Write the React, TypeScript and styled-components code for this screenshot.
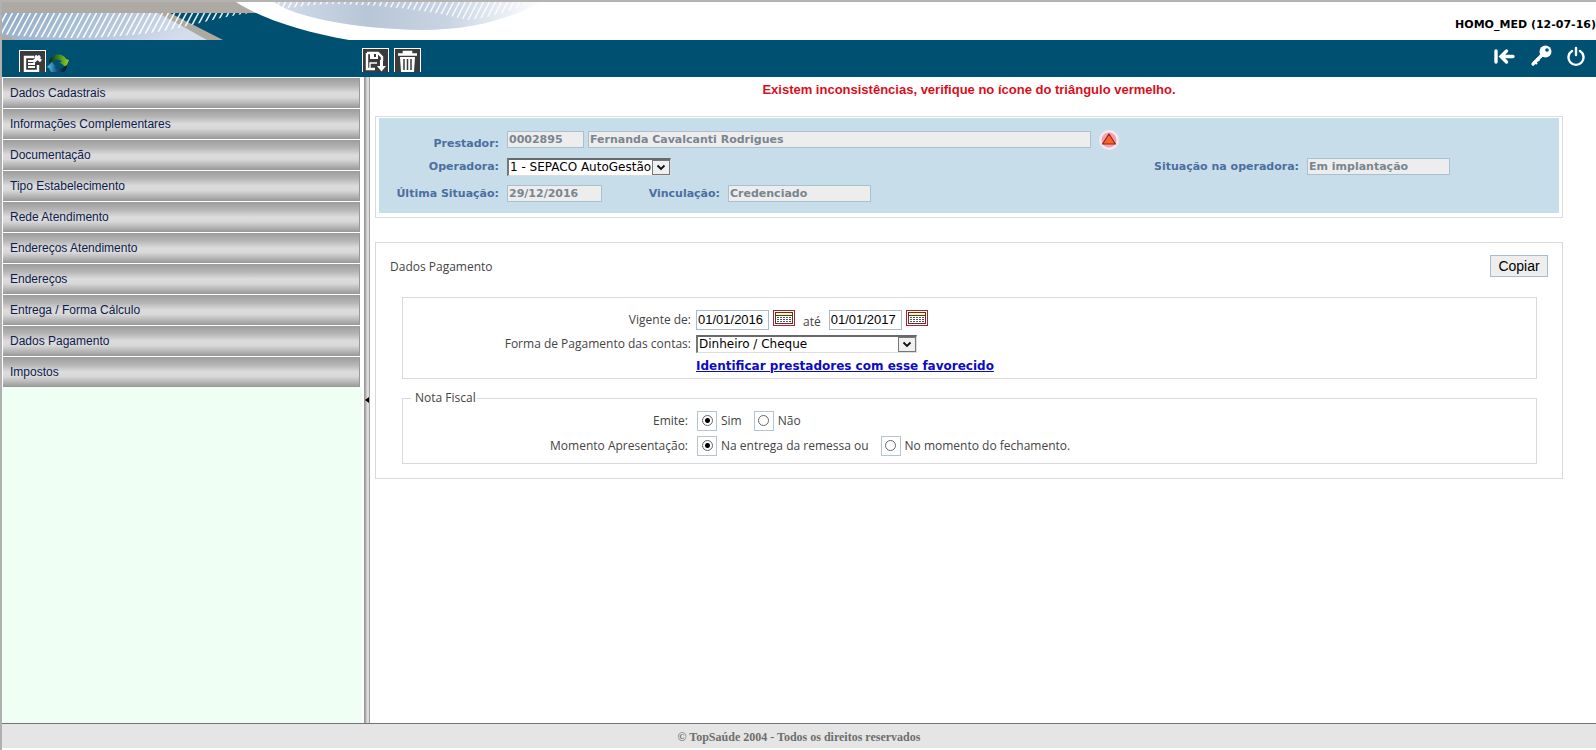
import React, { useState } from "react";
import styled, { createGlobalStyle } from "styled-components";

const verdana = `Verdana, "DejaVu Sans", sans-serif`;
const arial = `Arial, "Liberation Sans", sans-serif`;
const trebuchet = `"Open Sans", "Noto Sans", sans-serif`;

const GlobalStyle = createGlobalStyle`
  * { box-sizing: border-box; }
  body { margin: 0; background: #fff; overflow-x: hidden; }
  button, input, select { margin: 0; border-radius: 0; }
`;

const Shell = styled.div`
  display: flex;
  flex-direction: column;
  min-height: 100vh;
  padding-bottom: 2px;
  border-top: 2px solid #b3b3b3;
  border-left: 2px solid #b0b0b0;
`;

const Banner = styled.header`
  display: flex;
  align-items: center;
  justify-content: space-between;
  height: 38px;
  overflow: hidden;
`;

const BannerArt = styled.svg`
  display: block;
  flex: none;
`;

const Environment = styled.span`
  flex: none;
  padding-top: 8px;
  font: bold 11px/16px ${verdana};
  color: #000;
  white-space: nowrap;
`;

const Toolbar = styled.nav`
  display: flex;
  justify-content: space-between;
  height: 37px;
  background: #005072;
`;

const ToolGroup = styled.div<{ $width?: number; $gap: number }>`
  display: flex;
  align-items: flex-end;
  gap: ${(p) => p.$gap}px;
  width: ${(p) => (p.$width ? `${p.$width}px` : "auto")};
  padding-bottom: 5px;
`;

const Tools = styled.div`
  display: flex;
  padding-left: 17px;
`;

const ToolButton = styled.button<{ $height: number }>`
  width: 27px;
  height: ${(p) => p.$height}px;
  padding: 0;
  border: 1px solid #fff;
  border-bottom: 0;
  background: #3b3b3d;
  overflow: hidden;
  svg { display: block; }
`;

const PlainButton = styled.button`
  display: block;
  padding: 0;
  border: 0;
  background: none;
  svg { display: block; }
`;

const Session = styled.div`
  display: flex;
  align-items: flex-start;
  gap: 15px;
  padding: 5px 11px 0 0;
`;

const Body = styled.div`
  display: flex;
  flex: 1;
`;

const Sidebar = styled.aside`
  flex: none;
  width: 360px;
  margin-right: 2px;
  background: #f0fff4;
`;

const Menu = styled.ul`
  margin: 0;
  padding: 1px 2px 0 1px;
  list-style: none;
  background: #fff;
`;

const MenuLink = styled.a`
  display: block;
  height: 30px;
  margin-bottom: 1px;
  padding: 0 7px;
  border-right: 1px solid #999;
  background: linear-gradient(#9b9d9c, #b4b4b4 25%, #dcdcdc 50%, #d8d8d8 65%, #b4b4b4 85%, #979797);
  font: 12px/30px ${arial};
  color: #0d1b4c;
  text-decoration: none;
`;

const Splitter = styled.button`
  display: flex;
  flex: none;
  align-items: center;
  justify-content: center;
  width: 6px;
  padding: 0;
  border: 0;
  background: linear-gradient(90deg, #999 1px, #b8b8b8 2px, #dcdcdc 3px, #dcdcdc 5px, #a0a0a0 5px);
`;

const Content = styled.main`
  flex: 1;
  min-width: 0;
  padding: 0 33px 24px 5px;
`;

const Warning = styled.p`
  margin: 0;
  padding: 5px 0 19px;
  font: bold 13px/15px ${arial};
  color: #d8101c;
  text-align: center;
`;

const ProviderFrame = styled.section`
  padding: 1px 3px 4px;
  margin-bottom: 24px;
  border: 1px solid #d5dde3;
`;

const ProviderCard = styled.div`
  padding: 8px 0 6px;
  background: #c8ddea;
`;

const ProviderRow = styled.div`
  display: flex;
  align-items: center;
  height: 27px;
`;

const ProviderLabel = styled.label<{ $width?: number; $low?: boolean }>`
  flex: none;
  align-self: ${(p) => (p.$low ? "flex-end" : "center")};
  width: ${(p) => (p.$width ? `${p.$width}px` : "auto")};
  margin-right: 8px;
  font: bold 11px/19px ${verdana};
  color: #4b6f9f;
  text-align: right;
  white-space: nowrap;
`;

const ReadField = styled.input<{ $width: number }>`
  width: ${(p) => p.$width}px;
  height: 17px;
  margin-right: 4px;
  padding: 0 1px;
  border: 1px solid #a9c0d0;
  background: #ededed;
  font: bold 11px/15px ${verdana};
  color: #78868f;
`;

const Gap = styled.div<{ $size: number }>`
  flex: 0 0 ${(p) => p.$size}px;
`;

const RightPair = styled.div`
  display: flex;
  align-items: center;
  margin-left: auto;
  padding-right: 105px;
`;

const SelectBox = styled.span<{ $width: number }>`
  position: relative;
  display: block;
  width: ${(p) => p.$width}px;
  height: 18px;
  svg {
    position: absolute;
    top: 2px;
    right: 1px;
    pointer-events: none;
  }
`;

const SelectInput = styled.select`
  display: block;
  appearance: none;
  width: 100%;
  height: 18px;
  padding: 0 16px 0 1px;
  border: 1px solid #ddd;
  border-top: 2px solid #696969;
  border-left: 2px solid #777;
  background: #fff;
  font: 12px/15px ${verdana};
  color: #000;
`;

const PaymentPanel = styled.section`
  padding: 12px 14px 14px;
  border: 1px solid #d9d9dc;
`;

const PanelHead = styled.div`
  display: flex;
  align-items: center;
  justify-content: space-between;
  margin-bottom: 20px;
`;

const PanelTitle = styled.h1`
  margin: 0;
  padding-top: 2px;
  font: 500 12px/16px ${trebuchet};
  color: #444;
`;

const CopyButton = styled.button`
  width: 58px;
  height: 22px;
  padding: 0;
  border: 1px solid #a9bccb;
  background: #eee;
  font: 14px/18px ${arial};
  color: #000;
`;

const Group = styled.div`
  margin: 0 11px 11px 12px;
  padding: 9px 0 2px;
  border: 1px solid #d9d9dc;
`;

const InvoiceGroup = styled.fieldset`
  min-width: 0;
  margin: 0 11px 0 12px;
  padding: 2px 0 5px;
  border: 1px solid #d9d9dc;
`;

const Legend = styled.legend`
  height: 16px;
  margin-left: 8px;
  padding: 0 1px 0 4px;
  font: 500 12px/16px ${trebuchet};
  color: #444;
`;

const FormRow = styled.div<{ $height: number; $gap: number; $label: number }>`
  display: grid;
  grid-template-columns: ${(p) => p.$label}px 1fr;
  column-gap: ${(p) => p.$gap}px;
  align-items: center;
  height: ${(p) => p.$height}px;
`;

const FormLabel = styled.label`
  font: 500 12px/16px ${trebuchet};
  color: #444;
  text-align: right;
`;

const Inline = styled.div<{ $top?: boolean }>`
  display: flex;
  align-items: ${(p) => (p.$top ? "flex-start" : "center")};
`;

const DateField = styled.input`
  width: 73px;
  height: 20px;
  margin-right: 4px;
  padding: 0 1px;
  border: 1px solid #a9bccb;
  font: 13px/18px ${arial};
  color: #000;
`;

const Until = styled.label`
  margin: 0 8px;
  padding-top: 4px;
  font: 500 12px/16px ${trebuchet};
  color: #444;
`;

const FavoredLink = styled.a`
  justify-self: start;
  font: bold 12px/16px ${verdana};
  color: #0b0bc4;
`;

const Choice = styled.label`
  display: flex;
  align-items: center;
  gap: 4px;
  margin-right: 12px;
  font: 500 12px/20px ${trebuchet};
  color: #444;
`;

const RadioBox = styled.span`
  display: flex;
  align-items: center;
  justify-content: center;
  width: 20px;
  height: 20px;
  border: 1px solid #b4c5d2;
`;

const Radio = styled.input`
  appearance: none;
  width: 11px;
  height: 11px;
  border: 1px solid #666;
  border-radius: 50%;
  background: #fff;
  &:checked { background: radial-gradient(circle, #000 0 2px, #fff 3px); }
`;

const Footer = styled.footer`
  height: 25px;
  border-top: 1px solid #707478;
  background: #e5e5e5;
  font: bold 12px/27px "Liberation Serif", serif;
  color: #6e6e6e;
  text-align: center;
`;

const range = (start: number, end: number, step: number) =>
  Array.from({ length: Math.ceil((end - start) / step) }, (_, i) => start + i * step);

const Swoosh = () => (
  <BannerArt width="560" height="38" viewBox="0 0 560 38" aria-hidden="true">
    <defs>
      <linearGradient id="left" x1="0" x2="1" y1="0" y2="0.2">
        <stop offset="0" stopColor="#8eabc6" />
        <stop offset="0.6" stopColor="#b4c6d9" />
        <stop offset="1" stopColor="#d5ddec" />
      </linearGradient>
      <linearGradient id="right" x1="0" x2="1" y1="0" y2="0">
        <stop offset="0" stopColor="#d3dcea" />
        <stop offset="0.35" stopColor="#b7c6d6" />
        <stop offset="0.65" stopColor="#c9d4e3" />
        <stop offset="1" stopColor="#fff" />
      </linearGradient>
      <linearGradient id="hatchFade" gradientUnits="userSpaceOnUse" x1="0" x2="540" y1="0" y2="0">
        <stop offset="0" stopColor="#fff" />
        <stop offset="1" stopColor="#fff" stopOpacity="0.8" />
      </linearGradient>
      <clipPath id="leftHatch">
        <path d="M0 11H250C215 14 175 30 130 33C90 37 40 37 0 32Z" />
      </clipPath>
      <clipPath id="rightHatch">
        <path d="M272 0H530C505 10 485 17 465 18C435 10 390 3 330 2C310 2 290 6 280 7Z" />
      </clipPath>
    </defs>
    <path d="M0 0H236L270 12L221 38H0Z" fill="#aeaaa3" />
    <path d="M168 11H266L360 38H221Z" fill="#005072" />
    <path d="M0 11H156Q182 25 205 38H14Q6 34 0 33Z" fill="url(#left)" />
    <g clipPath="url(#leftHatch)" stroke="url(#hatchFade)" strokeWidth="1.5">
      {range(-16, 260, 6).map((x) => (
        <path key={x} d={`M${x} 38L${x + 15} 10`} />
      ))}
    </g>
    <path d="M234 0H560V38H347C300 30 258 16 234 0Z" fill="#fff" />
    <path d="M272 0H540C510 15 475 28 420 28C350 27 290 14 272 0Z" fill="url(#right)" />
    <g clipPath="url(#rightHatch)" stroke="url(#hatchFade)" strokeWidth="1.5">
      {range(260, 540, 6).map((x) => (
        <path key={x} d={`M${x} 22L${x + 12} -1`} />
      ))}
    </g>
  </BannerArt>
);

const EditIcon = () => (
  <svg width="25" height="21" viewBox="0 0 25 21">
    <path d="M14 6H5V20H18V14" fill="none" stroke="#fff" strokeWidth="2.4" />
    <path d="M8 10h5M8 13h7M8 16h7" stroke="#fff" strokeWidth="1.8" />
    <path d="M13 11L20 5M15 5l6 5" stroke="#fff" strokeWidth="3" />
  </svg>
);

const RefreshIcon = () => (
  <svg width="23" height="18" viewBox="0 0 23 18">
    <defs>
      <linearGradient id="greenArc" x1="0" x2="1" y1="0" y2="0">
        <stop offset="0" stopColor="#08240f" />
        <stop offset="0.5" stopColor="#3c8a1c" />
        <stop offset="1" stopColor="#9bd422" />
      </linearGradient>
      <linearGradient id="blueArc" x1="0" x2="1" y1="0" y2="0">
        <stop offset="0" stopColor="#5cc8ea" />
        <stop offset="0.5" stopColor="#14507a" />
        <stop offset="1" stopColor="#041420" />
      </linearGradient>
    </defs>
    <path d="M2 8C4-1 16-2 19 5L22 6L19 13L12 8L15 8C12 4 7 5 3 9Z" fill="url(#greenArc)" />
    <path d="M0 13L5 8L9 13H7C9 16 14 16 20 11C20 14 19 16 17 18H4L2 14Z" fill="url(#blueArc)" />
  </svg>
);

const SaveIcon = () => (
  <svg width="25" height="23" viewBox="0 0 25 23">
    <path d="M4 4H15L19 8V12M12 20H4V4" fill="none" stroke="#fff" strokeWidth="2.4" />
    <path d="M7 4H15V10H7Z" fill="#fff" />
    <path d="M11 5H13V8H11Z" fill="#3b3b3d" />
    <path d="M7 19V14H14" fill="none" stroke="#fff" strokeWidth="1.4" />
    <path d="M17 11h3v6h3l-4.500 5.500L14 17h3Z" fill="#fff" />
  </svg>
);

const TrashIcon = () => (
  <svg width="25" height="23" viewBox="0 0 25 23">
    <path d="M3 5.500H22M9 5V3H16V5" fill="none" stroke="#fff" strokeWidth="2.6" />
    <path d="M5 8H20L19 23H6Z" fill="#fff" />
    <path d="M9 10v11M12.500 10v11M16 10v11" stroke="#3b3b3d" strokeWidth="1.500" />
  </svg>
);

const BackIcon = () => (
  <svg width="22" height="22" viewBox="0 0 22 22" stroke="#fff" strokeWidth="3.400" strokeLinecap="round" fill="none">
    <path d="M3 6V17M8 11.500H20M13.500 6L8 11.500L13.500 17" />
  </svg>
);

const KeyIcon = () => (
  <svg width="22" height="22" viewBox="0 0 22 22">
    <path d="M12 10L3 19" stroke="#fff" strokeWidth="3.200" strokeLinecap="round" />
    <path d="M4 16L7 19M7 13L9 16" stroke="#fff" strokeWidth="2.200" />
    <circle cx="15.500" cy="6.500" r="6" fill="#fff" />
    <circle cx="17" cy="5" r="1.800" fill="#005072" />
  </svg>
);

const PowerIcon = () => (
  <svg width="18" height="22" viewBox="0 0 18 22" fill="none" stroke="#fff" strokeWidth="2.400" strokeLinecap="round">
    <path d="M9 3V10M5 6A7.500 7.500 0 1 0 13 6" />
  </svg>
);

const AlertIcon = () => (
  <svg width="20" height="20" viewBox="0 0 20 20">
    <circle cx="10" cy="10" r="10" fill="#f8e6ee" />
    <circle cx="10" cy="10" r="7.500" fill="#f2a0ac" />
    <path d="M10 4L16.500 14H3.500Z" fill="#fb6428" stroke="#8c2626" strokeWidth="1.200" strokeLinejoin="round" />
  </svg>
);

const CalendarIcon = () => (
  <svg width="22" height="16" viewBox="0 0 22 16" shapeRendering="crispEdges">
    <rect width="22" height="16" fill="#b3202c" />
    <rect x="1" y="1" width="20" height="14" fill="#fff" />
    <rect x="2" y="2" width="18" height="12" fill="#4a3a33" />
    <rect x="3" y="3" width="16" height="2" fill="#fbf3a6" />
    <rect x="3" y="6" width="16" height="7" fill="#fff" />
    <path d="M4 7.500H18M4 9.500H18M4 11.500H16" stroke="#555" strokeDasharray="2 1" />
    <path d="M16 9.500H18M16 11.500H18" stroke="#c0202c" />
  </svg>
);

const SelectArrow = () => (
  <svg width="18" height="15" viewBox="0 0 18 15" aria-hidden="true">
    <rect x="0.500" y="0.500" width="17" height="14" fill="#f0f0f0" stroke="#777" />
    <path d="M5.500 5.500L9 9L12.500 5.500" fill="none" stroke="#111" strokeWidth="1.800" />
  </svg>
);

const menuItems = [
  "Dados Cadastrais",
  "Informações Complementares",
  "Documentação",
  "Tipo Estabelecimento",
  "Rede Atendimento",
  "Endereços Atendimento",
  "Endereços",
  "Entrega / Forma Cálculo",
  "Dados Pagamento",
  "Impostos",
];

const Select = ({ id, width, options }: { id: string; width: number; options: string[] }) => (
  <SelectBox $width={width}>
    <SelectInput id={id}>
      {options.map((o) => (
        <option key={o}>{o}</option>
      ))}
    </SelectInput>
    <SelectArrow />
  </SelectBox>
);

const RadioGroup = ({ name, options }: { name: string; options: string[] }) => {
  const [value, setValue] = useState(options[0]);
  return (
    <Inline role="radiogroup" aria-labelledby={`${name}-label`}>
      {options.map((o) => (
        <Choice key={o}>
          <RadioBox>
            <Radio type="radio" name={name} checked={value === o} onChange={() => setValue(o)} />
          </RadioBox>
          {o}
        </Choice>
      ))}
    </Inline>
  );
};

export default function App() {
  return (
    <Shell>
      <GlobalStyle />
      <Banner>
        <Swoosh />
        <Environment>HOMO_MED (12-07-16)</Environment>
      </Banner>
      <Toolbar>
        <Tools>
          <ToolGroup $width={343} $gap={1}>
            <ToolButton $height={22} aria-label="Editar"><EditIcon /></ToolButton>
            <PlainButton aria-label="Atualizar"><RefreshIcon /></PlainButton>
          </ToolGroup>
          <ToolGroup $gap={5}>
            <ToolButton $height={24} aria-label="Salvar"><SaveIcon /></ToolButton>
            <ToolButton $height={24} aria-label="Excluir"><TrashIcon /></ToolButton>
          </ToolGroup>
        </Tools>
        <Session>
          <PlainButton aria-label="Voltar"><BackIcon /></PlainButton>
          <PlainButton aria-label="Senha"><KeyIcon /></PlainButton>
          <PlainButton aria-label="Sair"><PowerIcon /></PlainButton>
        </Session>
      </Toolbar>
      <Body>
        <Sidebar>
          <Menu>
            {menuItems.map((item) => (
              <li key={item}><MenuLink href="#">{item}</MenuLink></li>
            ))}
          </Menu>
        </Sidebar>
        <Splitter aria-label="Recolher menu">
          <svg width="4" height="6" viewBox="0 0 4 6"><path d="M4 0V6L0 3Z" /></svg>
        </Splitter>
        <Content>
          <Warning>Existem inconsistências, verifique no ícone do triângulo vermelho.</Warning>
          <ProviderFrame>
            <ProviderCard>
              <ProviderRow>
                <ProviderLabel $width={120} $low htmlFor="codigo">Prestador:</ProviderLabel>
                <ReadField id="codigo" $width={77} readOnly value="0002895" />
                <ReadField aria-label="Nome do prestador" $width={503} readOnly value="Fernanda Cavalcanti Rodrigues" />
                <Gap $size={4} />
                <AlertIcon />
              </ProviderRow>
              <ProviderRow>
                <ProviderLabel $width={120} htmlFor="operadora">Operadora:</ProviderLabel>
                <Select id="operadora" width={164} options={["1 - SEPACO AutoGestão"]} />
                <RightPair>
                  <ProviderLabel htmlFor="situacao">Situação na operadora:</ProviderLabel>
                  <ReadField id="situacao" $width={143} readOnly value="Em implantação" />
                </RightPair>
              </ProviderRow>
              <ProviderRow>
                <ProviderLabel $width={120} htmlFor="ultima">Última Situação:</ProviderLabel>
                <ReadField id="ultima" $width={95} readOnly value="29/12/2016" />
                <ProviderLabel $width={114} htmlFor="vinculacao">Vinculação:</ProviderLabel>
                <ReadField id="vinculacao" $width={143} readOnly value="Credenciado" />
              </ProviderRow>
            </ProviderCard>
          </ProviderFrame>
          <PaymentPanel>
            <PanelHead>
              <PanelTitle>Dados Pagamento</PanelTitle>
              <CopyButton>Copiar</CopyButton>
            </PanelHead>
            <Group>
              <FormRow $height={25} $gap={5} $label={288}>
                <FormLabel htmlFor="inicio">Vigente de:</FormLabel>
                <Inline $top>
                  <DateField id="inicio" defaultValue="01/01/2016" />
                  <PlainButton aria-label="Calendário inicial"><CalendarIcon /></PlainButton>
                  <Until htmlFor="fim">até</Until>
                  <DateField id="fim" defaultValue="01/01/2017" />
                  <PlainButton aria-label="Calendário final"><CalendarIcon /></PlainButton>
                </Inline>
              </FormRow>
              <FormRow $height={24} $gap={5} $label={288}>
                <FormLabel htmlFor="forma">Forma de Pagamento das contas:</FormLabel>
                <Select id="forma" width={221} options={["Dinheiro / Cheque"]} />
              </FormRow>
              <FormRow $height={20} $gap={5} $label={288}>
                <span />
                <FavoredLink href="#">Identificar prestadores com esse favorecido</FavoredLink>
              </FormRow>
            </Group>
            <InvoiceGroup>
              <Legend>Nota Fiscal</Legend>
              <FormRow $height={25} $gap={9} $label={285}>
                <FormLabel as="span" id="emite-label">Emite:</FormLabel>
                <RadioGroup name="emite" options={["Sim", "Não"]} />
              </FormRow>
              <FormRow $height={25} $gap={9} $label={285}>
                <FormLabel as="span" id="momento-label">Momento Apresentação:</FormLabel>
                <RadioGroup name="momento" options={["Na entrega da remessa ou", "No momento do fechamento."]} />
              </FormRow>
            </InvoiceGroup>
          </PaymentPanel>
        </Content>
      </Body>
      <Footer>© TopSaúde 2004 - Todos os direitos reservados</Footer>
    </Shell>
  );
}
